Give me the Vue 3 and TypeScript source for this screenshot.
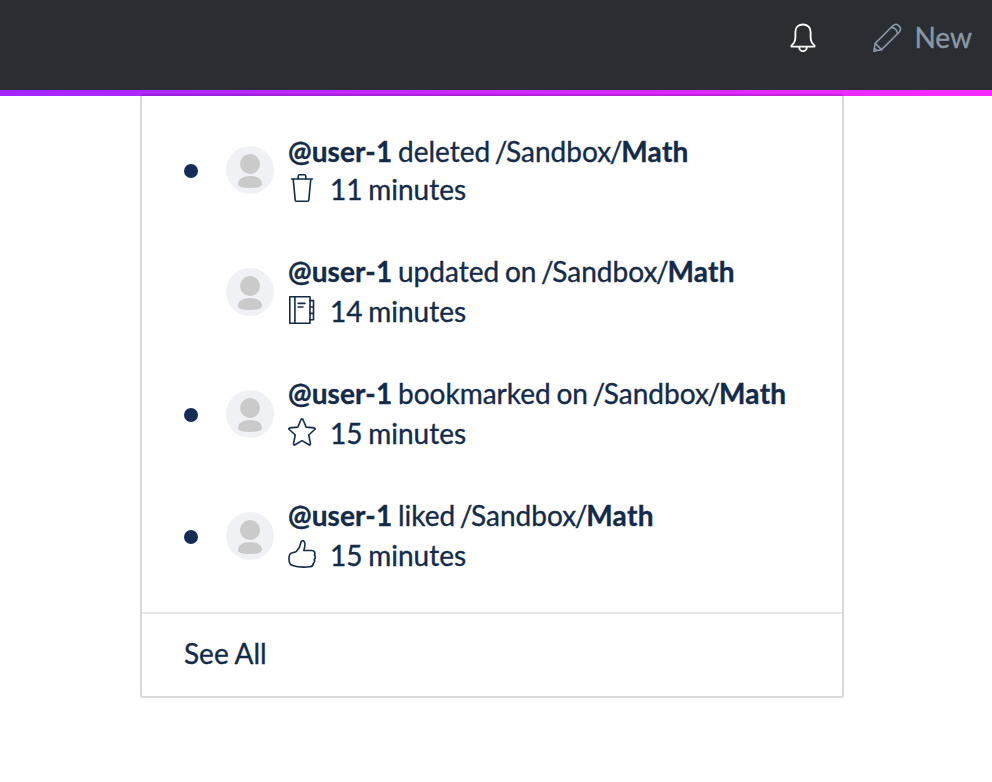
<script setup lang="ts">
type IconName = 'trash' | 'book' | 'star' | 'like'

interface Notice {
  user: string
  action: string
  folder: string
  page: string
  time: string
  icon: IconName
  unread: boolean
}

const notices: Notice[] = [
  { user: '@user-1', action: 'deleted', folder: 'Sandbox', page: 'Math', time: '11 minutes', icon: 'trash', unread: true },
  { user: '@user-1', action: 'updated on', folder: 'Sandbox', page: 'Math', time: '14 minutes', icon: 'book', unread: false },
  { user: '@user-1', action: 'bookmarked on', folder: 'Sandbox', page: 'Math', time: '15 minutes', icon: 'star', unread: true },
  { user: '@user-1', action: 'liked', folder: 'Sandbox', page: 'Math', time: '15 minutes', icon: 'like', unread: true },
]
</script>

<template>
  <div class="page">
    <header class="navbar">
      <svg class="bell" viewBox="0 0 28 30" fill="none" stroke="#fff" stroke-width="1.8" stroke-linejoin="round" stroke-linecap="round">
        <path d="M14 1.5C9.6 1.5 6.4 4.4 6.4 8.8V14C6.4 18.6 5 20.6 2.4 22.6V23.6H25.6V22.6C23 20.6 21.6 18.6 21.6 14V8.8C21.6 4.4 18.4 1.5 14 1.5Z" />
        <path d="M10.1 23.8C10.1 26.4 11.8 28.2 14 28.2S17.9 26.4 17.9 23.8" />
      </svg>
      <a class="new">
        <svg class="pencil" viewBox="0 0 30 30" fill="none" stroke="#8b97a5" stroke-width="1.6" stroke-linejoin="round" stroke-linecap="round">
          <path d="M1.8 28.2L3.2 20.4L20.8 2.8C25 -1 31 4.8 27 9.2L9.6 26.6L1.8 28.2Z" />
          <path d="M3.2 20.4L9.6 26.6M19.4 4.4C22.6 4.4 25.4 7.4 25.4 10.6M2.6 25.4L4.6 27.4" />
        </svg>
        <span class="label">New</span>
      </a>
    </header>
    <div class="stripe"></div>

    <section class="panel">
      <ul class="list">
        <li v-for="(n, i) in notices" :key="i" class="row">
          <span class="dot" :class="{ read: !n.unread }"></span>
          <svg class="avatar" viewBox="0 0 48 48">
            <circle cx="24" cy="24" r="24" fill="#f0f1f5" />
            <circle cx="24" cy="18" r="10" fill="#cacaca" />
            <path d="M12 38C12 33 17 30 24 30S36 33 36 38C36 41 30 42 24 42S12 41 12 38Z" fill="#cacaca" />
          </svg>
          <div class="body">
            <div class="title"><b class="user">{{ n.user }}</b> {{ n.action }} <span class="slash">/</span>{{ n.folder }}<span class="slash">/</span><b class="name">{{ n.page }}</b></div>
            <div class="meta">
              <svg class="icon" viewBox="0 0 28 28" fill="none" stroke="#132a4b" stroke-width="1.6" stroke-linejoin="round" stroke-linecap="round">
                <template v-if="n.icon === 'trash'">
                  <path d="M3.6 5H24.4M5.2 5.2L7.2 26.2Q7.3 27.2 8.3 27.2H19.7Q20.7 27.2 20.8 26.2L22.8 5.2" />
                  <path d="M10.2 4.8V2.2Q10.2.8 11.6.8H16.4Q17.8.8 17.8 2.2V4.8" />
                </template>
                <template v-else-if="n.icon === 'book'">
                  <path d="M1.8.8H22V27.2H1.8ZM6.9.8V27.2M10.2 7.4H17M10.2 11H15" />
                  <path d="M22 4.6H25.5V23.8H22M22 11H25.5M22 17.4H25.5" />
                </template>
                <path v-else-if="n.icon === 'star'" d="M13.1 1.5Q14 .1 14.9 1.5L18.2 9.1L26.3 9.9Q27.8 10.3 26.7 11.5L20.7 17L22.5 25.6Q22.5 27.4 21 26.7L14 22.6L7 26.7Q5.5 27.4 5.5 25.6L7.3 17L1.3 11.5Q.2 10.3 1.7 9.9L9.8 9.1Z" />
                <path v-else d="M8.4 11.4C10.6 9.3 12.2 6.4 12.6 3.6C12.9 1.2 14 .5 15.3 .8C17.7 1.7 17.3 5.6 15.8 10.5H23.8C26.4 10.5 27.7 13 26.4 15C27.6 16.4 27.4 18.3 26.2 19.6C26.9 21 26.5 22.5 25.3 23.4C25.4 25.4 24.2 26.4 22 26.7C16.6 27.4 10 27.3 4.6 25.4C-.2 24.3 -.2 13.5 4.3 12.8C5.8 12.7 7.2 12.4 8.4 11.4Z" />
              </svg>
              <span>{{ n.time }}</span>
            </div>
          </div>
        </li>
      </ul>
      <a class="all">See All</a>
    </section>
  </div>
</template>

<style>
body {
  margin: 0;
  background: #fff;
}
</style>

<style scoped>
.page {
  height: 782px;
  overflow: hidden;
  font-family: Lato, sans-serif;
  font-size: 28px;
  word-spacing: -1.4px;
  color: #132a4b;
  -webkit-text-stroke: 0.35px;
}
.navbar {
  box-sizing: border-box;
  height: 90px;
  padding: 0 20px 15px 0;
  background: #2a2e33;
  display: flex;
  justify-content: flex-end;
  align-items: center;
}
.bell {
  width: 28px;
  height: 30px;
  margin-right: 55px;
}
.new {
  display: flex;
  align-items: center;
  color: #8b97a5;
}
.label {
  padding-bottom: 2px;
}
.pencil {
  width: 30px;
  height: 30px;
  margin-right: 12px;
}
.stripe {
  height: 6px;
  background: linear-gradient(90deg, #a326ff, #f72bff);
}
.panel {
  box-sizing: border-box;
  position: relative;
  width: 704px;
  height: 604px;
  margin: -2px 0 0 140px;
  border: 2px solid rgba(0, 0, 0, 0.15);
  border-radius: 3px;
  background: #fff;
  background-clip: padding-box;
}
.list {
  list-style: none;
  margin: 0;
  padding: 13px 0 15px;
  border-bottom: 2px solid #e2e5e8;
}
.row {
  box-sizing: border-box;
  height: 122px;
  padding-left: 42px;
  display: flex;
  align-items: center;
}
.dot {
  width: 14px;
  height: 14px;
  margin: 2px 28px 0 0;
  border-radius: 50%;
  background: #142c58;
}
.dot.read {
  visibility: hidden;
}
.avatar {
  width: 48px;
  height: 48px;
  margin-right: 14px;
}
.title,
.meta {
  height: 40px;
  line-height: 38px;
  white-space: nowrap;
}
.row:first-child .title {
  height: 38px;
}
.row:first-child .body {
  padding-top: 2px;
}
.user {
  letter-spacing: 0.1px;
}
.name {
  letter-spacing: 0.3px;
}
.slash {
  margin: 0 -1.3px;
}
.meta {
  display: flex;
  align-items: flex-start;
}
.icon {
  width: 28px;
  height: 28px;
  margin: 4px 14px 0 0;
}
.all {
  display: block;
  padding-left: 42px;
  line-height: 78px;
  word-spacing: -0.4px;
}
</style>
